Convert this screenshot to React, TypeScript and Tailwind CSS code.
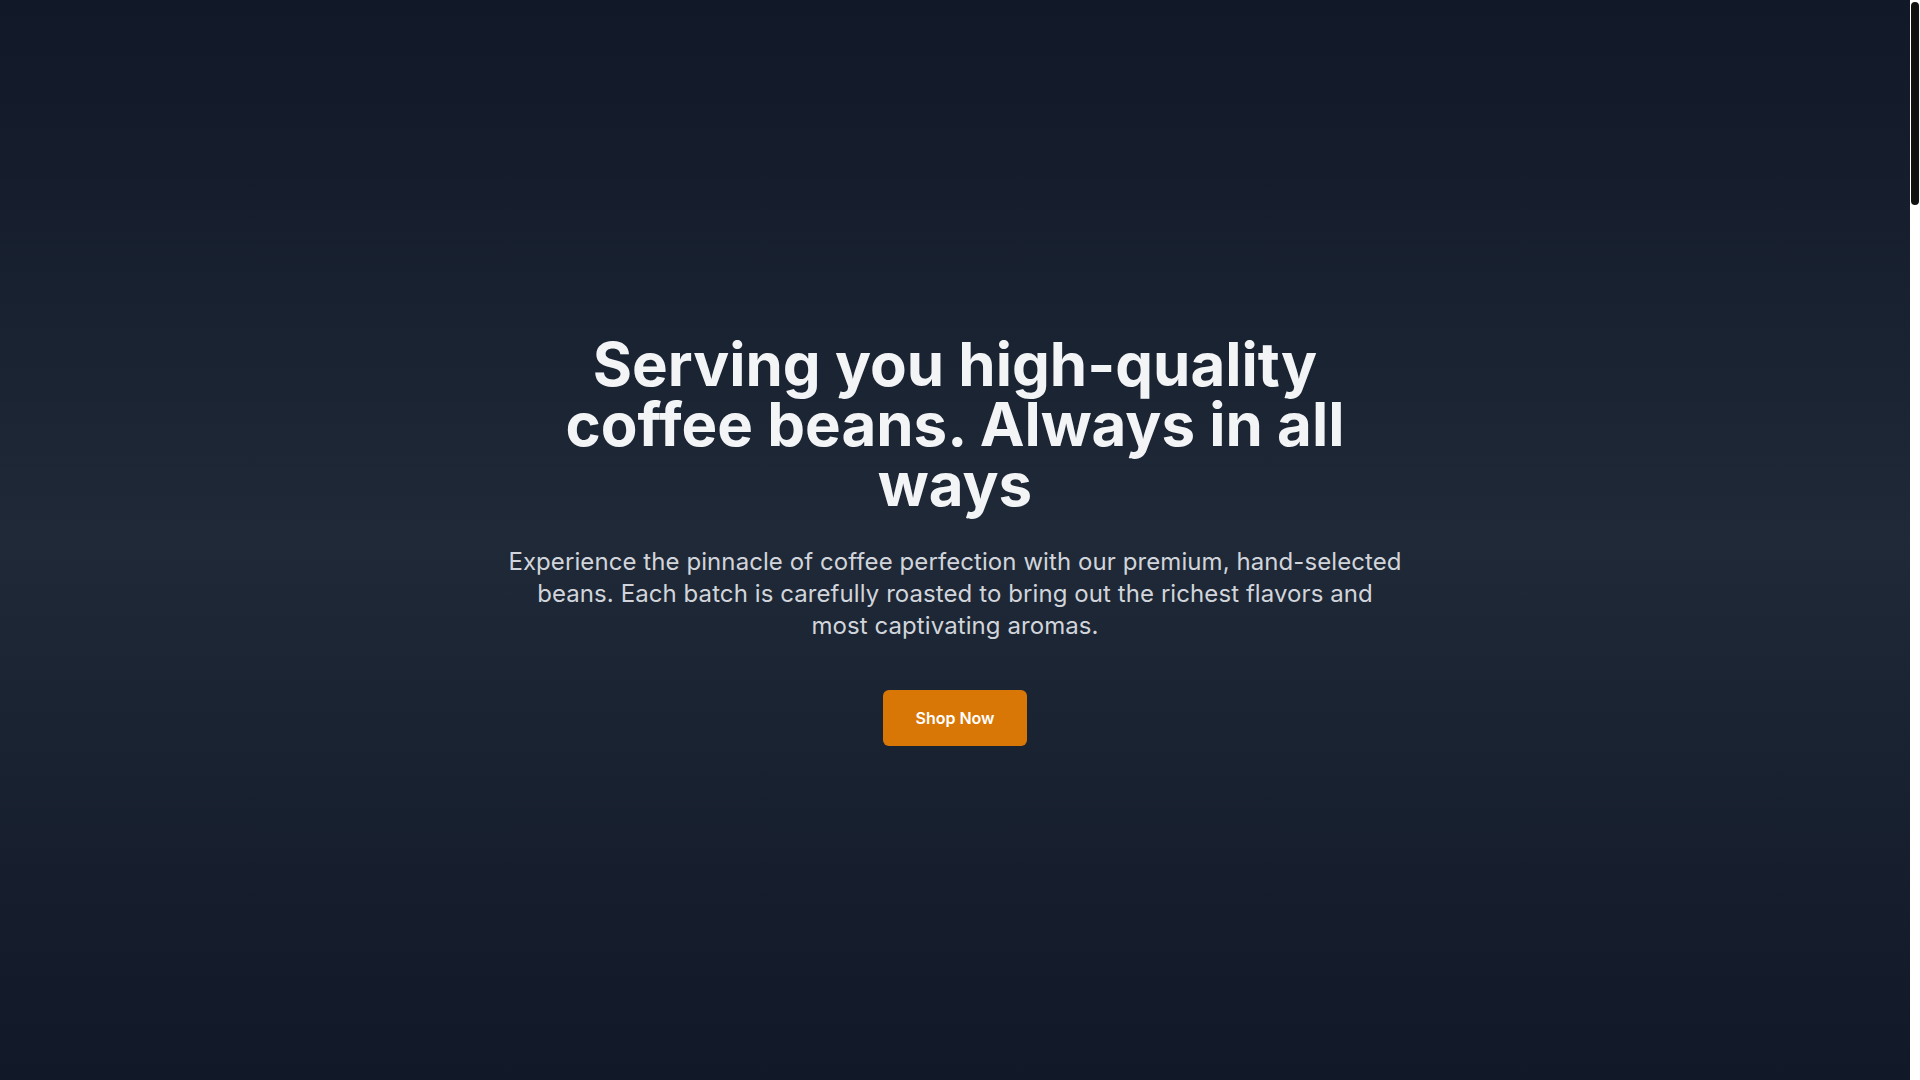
export default function App() {
  return (
    <div className="h-screen flex bg-[#111827] font-['Inter',sans-serif]">
      <section className="flex-1 flex items-center justify-center bg-gradient-to-b from-[#111827] via-[#1f2937] to-[#111827] px-4">
        <div className="max-w-4xl text-center flex flex-col items-center">
          <h1 className="text-6xl font-bold text-[#f3f4f6] leading-none mb-8">
            Serving you high-quality coffee beans. Always in all ways
          </h1>
          <p className="max-w-[894px] text-2xl text-[#d1d5db] leading-8 tracking-[0.08px]">
            Experience the pinnacle of coffee perfection with our premium, hand-selected beans. Each batch is carefully
            roasted to bring out the richest flavors and most captivating aromas.
          </p>
          <button className="mt-12 px-8 py-4 rounded-md bg-[#d97706] text-white text-base font-semibold leading-6 hover:bg-[#b45309]">
            Shop Now
          </button>
        </div>
      </section>
      {/* page scrollbar */}
      <div className="w-[10px] bg-white pt-[2px] px-[1px]">
        <div className="h-[203px] rounded-full bg-[#111111]" />
      </div>
    </div>
  );
}
